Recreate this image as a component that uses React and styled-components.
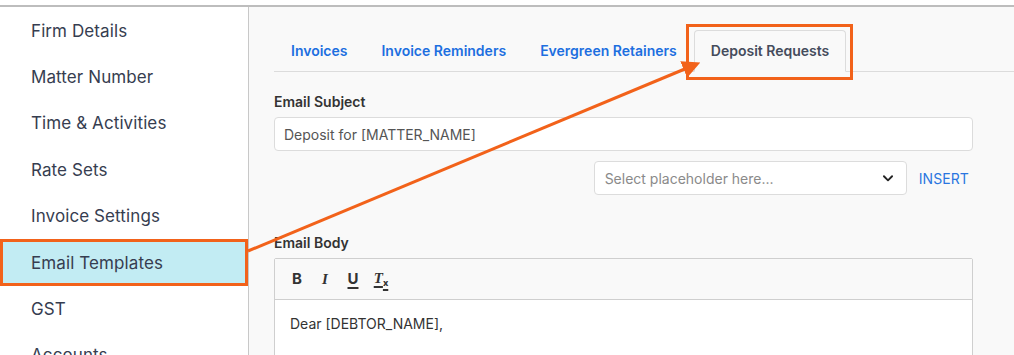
import styled, { createGlobalStyle } from "styled-components";

const GlobalStyle = createGlobalStyle`
  html, body {
    margin: 0;
    padding: 0;
    background: #fff;
    font-family: Inter, "Noto Sans", sans-serif;
  }
`;

const Page = styled.div`
  position: relative;
  padding-top: 5px;
  height: 350px;
  overflow: hidden;
`;

const Frame = styled.div`
  display: flex;
  border-top: 2px solid #bdbdbd;
  height: 100%;
`;

const SideBar = styled.nav`
  width: 248px;
  flex-shrink: 0;
  border-right: 1px solid #c8c8c8;
  background: #fff;
  padding-top: 0.5px;
`;

const NavItem = styled.div`
  display: flex;
  align-items: center;
  height: 46.4px;
  box-sizing: border-box;
  padding-left: ${(p) => (p.$active ? "28px" : "31px")};
  font-size: 17px;
  color: #363d50;
  letter-spacing: 0.1px;
  background: ${(p) => (p.$active ? "#c2ecf3" : "transparent")};
  border: ${(p) => (p.$active ? "3px solid #f2621a" : "none")};
`;

const Main = styled.main`
  flex: 1;
  background: #f9f9f9;
  padding-left: 25px;
  padding-top: 23px;
`;

const TabBar = styled.div`
  display: flex;
  border-bottom: 1px solid #dcdcdc;
  height: 42px;
  box-sizing: border-box;
`;

const TabOutline = styled.div`
  display: flex;
  margin: -6px -7px -9px -8px;
  border: 3px solid #f2621a;
  padding: 3px 4px 6px 5px;
`;

const Tab = styled.div`
  display: flex;
  align-items: center;
  padding: 0 16px 1px;
  font-size: 14px;
  font-weight: 600;
  color: ${(p) => (p.$active ? "#454c5c" : "#1d6fe0")};
  border: 1px solid ${(p) => (p.$active ? "#dcdcdc" : "transparent")};
  border-bottom: ${(p) => (p.$active ? "1px solid #f9f9f9" : "none")};
  border-radius: 4px 4px 0 0;
  background: #f9f9f9;
  height: ${(p) => (p.$active ? "42px" : "41px")};
  box-sizing: border-box;
`;

const Form = styled.div`
  width: 699px;
  padding-top: 20px;
`;

const Label = styled.div`
  font-size: 14px;
  font-weight: 600;
  color: #333;
  line-height: 20px;
  margin-bottom: 5px;
  margin-top: ${(p) => p.$top || "0"};
`;

const Input = styled.div`
  height: 34px;
  box-sizing: border-box;
  background: #fff;
  border: 1px solid #dcdcdc;
  border-radius: 4px;
  display: flex;
  align-items: center;
  padding-left: 9px;
  font-size: 14px;
  color: #555;
`;

const PlaceholderRow = styled.div`
  display: flex;
  justify-content: flex-end;
  align-items: center;
  margin-top: 10px;
  gap: 12px;
`;

const Select = styled.div`
  width: 313px;
  height: 34px;
  box-sizing: border-box;
  background: #fff;
  border: 1px solid #dcdcdc;
  border-radius: 4px;
  display: flex;
  align-items: center;
  justify-content: space-between;
  padding: 0 11px 0 10px;
  font-size: 14px;
  color: #8a8a8a;
`;

const InsertButton = styled.div`
  font-size: 14px;
  color: #2a76e0;
  padding-right: 4px;
  letter-spacing: 0.1px;
`;

const Editor = styled.div`
  border: 1px solid #cfcfcf;
  border-radius: 2px 2px 0 0;
  background: #fff;
  height: 120px;
`;

const Toolbar = styled.div`
  display: flex;
  align-items: center;
  height: 40px;
  border-bottom: 1px solid #cfcfcf;
  background: #f9f9f9;
  padding-left: 14px;
  gap: 12px;
`;

const ToolButton = styled.span`
  width: 16px;
  display: inline-flex;
  justify-content: center;
  align-items: baseline;
  font-size: 15px;
  line-height: 18px;
  color: #333;
  font-weight: 700;
  font-style: ${(p) => (p.$italic ? "italic" : "normal")};
  font-family: ${(p) => (p.$serif ? '"Liberation Serif", serif' : "Inter, sans-serif")};
  text-decoration: ${(p) => (p.$underline ? "underline" : "none")};
  text-decoration-thickness: 1.5px;
  text-underline-offset: 3px;
`;

const Sub = styled.span`
  font-family: Inter, sans-serif;
  font-size: 9px;
  font-weight: 800;
  font-style: normal;
  position: relative;
  top: 3px;
  text-decoration: none;
  display: inline-block;
`;

const Body = styled.div`
  padding: 15px 15px;
  font-size: 14px;
  color: #333;
`;

const Overlay = styled.svg`
  position: absolute;
  left: 0;
  top: 0;
  pointer-events: none;
`;

const navItems = [
  "Firm Details",
  "Matter Number",
  "Time & Activities",
  "Rate Sets",
  "Invoice Settings",
  "Email Templates",
  "GST",
  "Accounts",
];

function ChevronDown() {
  return (
    <svg width="14" height="14" viewBox="0 0 24 24" fill="none" stroke="#222" strokeWidth="3.2" strokeLinecap="round" strokeLinejoin="round">
      <path d="M5 9l7 7 7-7" />
    </svg>
  );
}

export default function App() {
  return (
    <>
      <GlobalStyle />
      <Page>
        <Frame>
          <SideBar>
            {navItems.map((item) => (
              <NavItem key={item} $active={item === "Email Templates"}>
                {item}
              </NavItem>
            ))}
          </SideBar>
          <Main>
            <TabBar>
              <Tab>Invoices</Tab>
              <Tab>Invoice Reminders</Tab>
              <Tab>Evergreen Retainers</Tab>
              <TabOutline>
                <Tab $active>Deposit Requests</Tab>
              </TabOutline>
            </TabBar>
            <Form>
              <Label>Email Subject</Label>
              <Input>Deposit for [MATTER_NAME]</Input>
              <PlaceholderRow>
                <Select>
                  <span>Select placeholder here...</span>
                  <ChevronDown />
                </Select>
                <InsertButton>INSERT</InsertButton>
              </PlaceholderRow>
              <Label $top="38px">Email Body</Label>
              <Editor>
                <Toolbar>
                  <ToolButton>B</ToolButton>
                  <ToolButton $italic $serif>I</ToolButton>
                  <ToolButton $underline>U</ToolButton>
                  <ToolButton $italic $serif $underline>
                    T<Sub>x</Sub>
                  </ToolButton>
                </Toolbar>
                <Body>Dear [DEBTOR_NAME],</Body>
              </Editor>
            </Form>
          </Main>
        </Frame>
        <Overlay width="1014" height="355">
          <defs>
            <marker id="head" markerWidth="6" markerHeight="6" refX="3" refY="3" orient="auto" markerUnits="strokeWidth">
              <path d="M0,0 L6,3 L0,6 z" fill="#f2621a" />
            </marker>
          </defs>
          <line x1="248" y1="251" x2="692" y2="66" stroke="#f2621a" strokeWidth="3" markerEnd="url(#head)" />
        </Overlay>
      </Page>
    </>
  );
}
